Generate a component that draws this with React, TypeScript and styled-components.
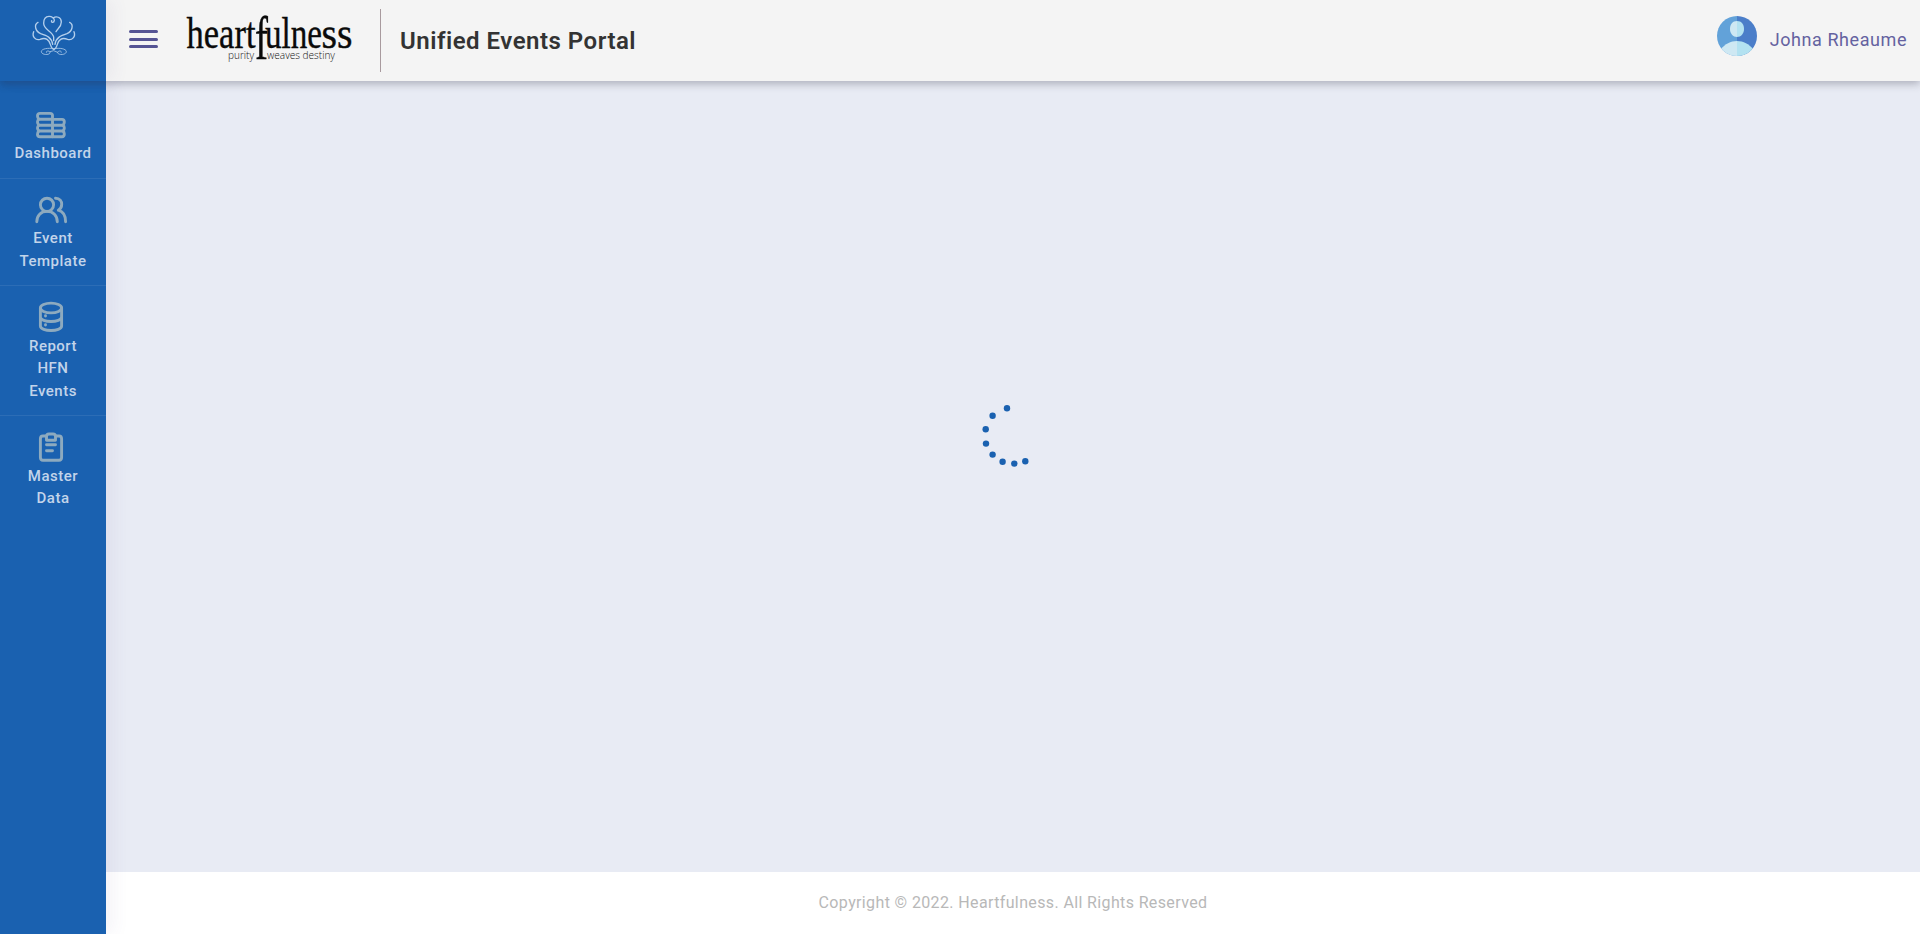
import React from 'react';
import styled, { createGlobalStyle } from 'styled-components';

const GlobalStyle = createGlobalStyle`
  * { box-sizing: border-box; }
  html, body { margin: 0; padding: 0; }
  body {
    font-family: Roboto, sans-serif;
    background: #e8ebf4;
    overflow: hidden;
  }
`;

const Page = styled.div`
  display: flex;
  flex-direction: column;
  height: 100vh;
`;

const Header = styled.header`
  display: flex;
  flex: none;
  height: 81px;
  background: #f4f4f4;
  box-shadow: 0 3px 8px rgba(40, 40, 60, 0.3);
  position: relative;
  z-index: 3;
`;

const Brand = styled.div`
  flex: none;
  width: 106px;
  padding: 13px 0 0 30px;
  background: #1a61b0;
  box-shadow: 8px 0 16px rgba(90, 60, 140, 0.06);
`;

const HeaderBar = styled.div`
  display: flex;
  flex: 1;
  padding: 0 13px 0 23px;
`;

const MenuButton = styled.button`
  display: flex;
  flex-direction: column;
  justify-content: space-between;
  width: 29px;
  height: 18px;
  margin: 30px 27px 0 0;
  padding: 0;
  border: 0;
  background: none;
`;

const MenuLine = styled.span`
  height: 3px;
  border-radius: 2px;
  background: #555494;
`;

const Title = styled.h1`
  margin: 0;
  padding-left: 19px;
  font-size: 24px;
  font-weight: 600;
  line-height: 82px;
  letter-spacing: 0.5px;
  color: #333;
`;

const Divider = styled.span`
  width: 1px;
  height: 63px;
  margin: 9px 0 0 25px;
  background: #a89a9e;
`;

const User = styled.div`
  display: flex;
  margin-left: auto;
  padding-top: 16px;
  gap: 13px;
`;

const UserName = styled.span`
  font-size: 18px;
  line-height: 48px;
  letter-spacing: 0.57px;
  color: #6462a0;
`;

const Body = styled.div`
  display: flex;
  flex: 1;
  min-height: 0;
`;

const Sidebar = styled.nav`
  flex: none;
  width: 106px;
  padding-top: 13px;
  background: #1a61b0;
  box-shadow: 8px 0 16px rgba(90, 60, 140, 0.06);
  position: relative;
  z-index: 2;
`;

const NavItem = styled.a`
  display: flex;
  flex-direction: column;
  align-items: center;
  padding: 14.65px 10px 13.08px;
  border-bottom: 1px solid #2c6db6;
  color: #c2d4ea;
  font-size: 15px;
  font-weight: 500;
  line-height: 22.5px;
  letter-spacing: 0.5px;
  text-align: center;

  &:last-child { padding-top: 15.2px; border-bottom: 0; }

  svg { display: block; margin: 0 4px 1.67px 0; }
`;

const Content = styled.div`
  display: flex;
  flex: 1;
  flex-direction: column;
`;

const Main = styled.main`
  display: flex;
  flex: 1;
  align-items: center;
  justify-content: center;
  background: #e8ebf4;
  padding-bottom: 81px;
`;

const Footer = styled.footer`
  flex: none;
  height: 62px;
  background: #fff;
  color: #b8b8b8;
  font-size: 16px;
  line-height: 62px;
  letter-spacing: 0.37px;
  text-align: center;
`;

const WordmarkSvg = styled.svg`
  display: block;
  flex: none;
  margin-top: 14px;
  overflow: visible;
`;

const lotusHalf = (
  <>
    <path d="M114 67C101 74 106 94 122 101C140 107 155 112 158 133" />
    <path d="M101 95C95 110 107 122 120 118C139 111 147 120 151 133C154 143 157 147 162 148" />
    <path d="M160 146C145 143 124 146 124 155C125 166 151 166 150 157C148 151 137 152 139 157" strokeWidth="2.4" />
  </>
);

const LotusLogo = () => (
  <svg width="47" height="44" viewBox="90 39 141 132" fill="none" stroke="#b4cfec" strokeWidth="4" strokeLinecap="round">
    {lotusHalf}
    <g transform="translate(323 0) scale(-1 1)">{lotusHalf}</g>
    <path d="M155 62C152 68 162 70 163 61C163 47 131 41 131 70C131 90 158 94 161 111L161 122" />
    <path d="M160 54C168 47 184 51 184 66C184 82 171 87 168 95" />
    <path d="M150 155L161 152L173 157" strokeWidth="2.4" />
  </svg>
);

const Wordmark = () => (
  <WordmarkSvg width="170" height="50" viewBox="185 14 170 50">
    <g fontFamily="'Liberation Serif', serif" fill="#0a0a0a" stroke="#0a0a0a" strokeWidth=".4">
      <text x="186.5" y="47.7" fontSize="44.500" textLength="69" lengthAdjust="spacingAndGlyphs">heart</text>
      <text x="255" y="59.3" fontSize="62" textLength="13" lengthAdjust="spacingAndGlyphs">f</text>
      <text x="265" y="47.7" fontSize="44.500" textLength="57" lengthAdjust="spacingAndGlyphs">ulne</text>
      <text x="321.5" y="47.7" fontSize="44.500" textLength="31" lengthAdjust="spacingAndGlyphs">ss</text>
    </g>
    <g fontFamily="'Open Sans', sans-serif" fontWeight="300" fontSize="11" fill="#111">
      <text x="228" y="59.3" textLength="26" lengthAdjust="spacingAndGlyphs">purity</text>
      <text x="267" y="59.3" textLength="68" lengthAdjust="spacingAndGlyphs">weaves destiny</text>
    </g>
  </WordmarkSvg>
);

const Avatar = () => (
  <svg width="40" height="40" viewBox="0 0 40 40">
    <clipPath id="disc"><circle cx="20" cy="20" r="20" /></clipPath>
    <g clipPath="url(#disc)">
      <path d="M0 0H20V40H0Z" fill="#62a2d9" />
      <path d="M20 0H40V40H20Z" fill="#4b7ec9" />
      <path d="M20 5C15.500 5 13 8.500 13 13S16 21 20 21Z" fill="#cee8f3" />
      <path d="M20 5C24.500 5 27 8.500 27 13S24 21 20 21Z" fill="#b3e2f1" />
      <path d="M20 25C13.500 25 8 28 4 33V40H20Z" fill="#cee8f3" />
      <path d="M20 25C26.500 25 32 28 36 33V40H20Z" fill="#b3e2f1" />
    </g>
  </svg>
);

const NavIcon = ({ children }: { children: React.ReactNode }) => (
  <svg width="34" height="32" viewBox="0 0 34 32" fill="none" stroke="#8daabf" strokeWidth="2.9" strokeLinecap="round" strokeLinejoin="round">
    {children}
  </svg>
);

const items = [
  {
    lines: ['Dashboard'],
    icon: (
      <>
        <path d="M6 4.400H16Q18.500 4.400 18.500 6.500V27.700H6Q3.500 27.700 3.500 25.500Q3.500 23 5 22Q3.500 21 3.500 19Q3.500 17 5 16.200Q3.500 15 3.500 13Q3.500 11 5 10.300Q3.500 9 3.500 7Q3.500 4.400 6 4.400Z" />
        <path d="M18.500 10.400H28Q30.300 10.400 30.300 13Q30.300 15 29 16.200Q30.300 17 30.300 19Q30.300 21 29 22Q30.300 23 30.300 25Q30.300 27.700 28 27.700H18.500" />
        <path d="M5 10.300H18.500M5 16.200H29M5 22H29" />
      </>
    ),
  },
  {
    lines: ['Event', 'Template'],
    icon: (
      <>
        <circle cx="13" cy="10.800" r="6.600" />
        <path d="M2.800 27.800C2.800 21.500 7 17.400 13 17.400S23.300 21.500 23.300 27.800" />
        <path d="M21.500 4.200C26 4.200 27.700 7.500 27.700 10.300C27.700 13 26.500 15 24.300 16.200C29 17.500 31.600 22 31.600 27.800" />
      </>
    ),
  },
  {
    lines: ['Report', 'HFN', 'Events'],
    icon: (
      <>
        <ellipse cx="17" cy="7" rx="10.600" ry="4.900" />
        <path d="M6.400 7V25C6.400 31 27.600 31 27.600 25V7M6.400 16C6.400 22 27.600 22 27.600 16" />
        <path d="M11.500 14.700V15M11.500 23.700V24" />
      </>
    ),
  },
  {
    lines: ['Master', 'Data'],
    icon: (
      <>
        <path d="M12 5H9Q6.400 5 6.400 7.800V26.500Q6.400 29.200 9 29.200H25Q27.600 29.200 27.600 26.500V7.800Q27.600 5 25 5H22" />
        <path d="M12.500 5.500Q12.500 3 15 3H19Q21.500 3 21.500 5.500V9.200H12.500ZM12.500 13.700H21.500M12.500 19.700H18.500" />
      </>
    ),
  },
];

const dots = [
  [1007, 408.2], [992.6, 415.7], [985.7, 429.3], [986, 443.6],
  [992.6, 454.6], [1002.6, 461.7], [1014.3, 463.6], [1025.3, 461.3],
];

const Spinner = () => (
  <svg width="64" height="64" viewBox="981 404 64 64" fill="#1a61b0">
    {dots.map(([x, y]) => <circle key={x + y} cx={x} cy={y} r="3.200" />)}
  </svg>
);

export default function App() {
  return (
    <Page>
      <GlobalStyle />
      <Header>
        <Brand><LotusLogo /></Brand>
        <HeaderBar>
          <MenuButton aria-label="Menu"><MenuLine /><MenuLine /><MenuLine /></MenuButton>
          <Wordmark />
          <Divider />
          <Title>Unified Events Portal</Title>
          <User>
            <Avatar />
            <UserName>Johna Rheaume</UserName>
          </User>
        </HeaderBar>
      </Header>
      <Body>
        <Sidebar>
          {items.map(({ lines, icon }) => (
            <NavItem key={lines[0]}>
              <NavIcon>{icon}</NavIcon>
              {lines.map((line) => <span key={line}>{line}</span>)}
            </NavItem>
          ))}
        </Sidebar>
        <Content>
          <Main><Spinner /></Main>
          <Footer>Copyright © 2022. Heartfulness. All Rights Reserved</Footer>
        </Content>
      </Body>
    </Page>
  );
}
